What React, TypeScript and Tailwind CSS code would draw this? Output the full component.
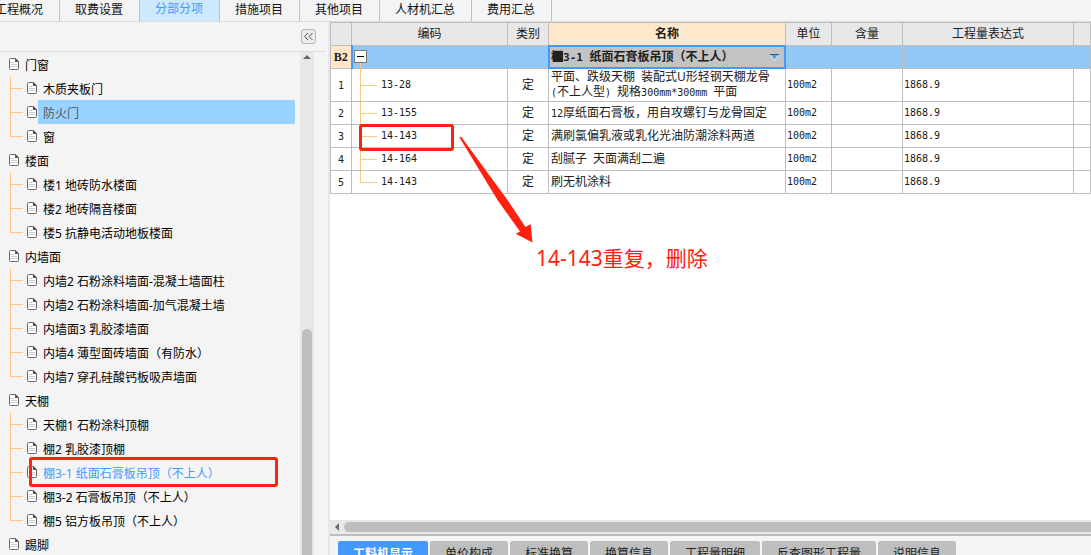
import React from "react";

type Group = { name: string; items: string[] };

const topTabs = ["工程概况", "取费设置", "分部分项", "措施项目", "其他项目", "人材机汇总", "费用汇总"];
const bottomTabs = ["工料机显示", "单价构成", "标准换算", "换算信息", "工程量明细", "反查图形工程量", "说明信息"];

const groups: Group[] = [
  { name: "门窗", items: ["木质夹板门", "防火门", "窗"] },
  { name: "楼面", items: ["楼1 地砖防水楼面", "楼2 地砖隔音楼面", "楼5 抗静电活动地板楼面"] },
  {
    name: "内墙面",
    items: [
      "内墙2 石粉涂料墙面-混凝土墙面柱",
      "内墙2 石粉涂料墙面-加气混凝土墙",
      "内墙面3 乳胶漆墙面",
      "内墙4 薄型面砖墙面（有防水）",
      "内墙7 穿孔硅酸钙板吸声墙面",
    ],
  },
  {
    name: "天棚",
    items: [
      "天棚1 石粉涂料顶棚",
      "棚2 乳胶漆顶棚",
      "棚3-1 纸面石膏板吊顶（不上人）",
      "棚3-2 石膏板吊顶（不上人）",
      "棚5 铝方板吊顶（不上人）",
    ],
  },
  { name: "踢脚", items: [] },
];

const highlighted = "防火门";
const current = "棚3-1 纸面石膏板吊顶（不上人）";

function Mono({ children }: { children: React.ReactNode }) {
  return <span className="font-['DejaVu_Sans_Mono',monospace] text-[10px]">{children}</span>;
}

const rows: { code: string; name: React.ReactNode }[] = [
  {
    code: "13-28",
    name: (
      <>
        平面、跌级天棚<Mono> </Mono>装配式U形轻钢天棚龙骨
        <br />
        <Mono>(</Mono>不上人型<Mono>) </Mono>规格<Mono>300mm*300mm </Mono>平面
      </>
    ),
  },
  { code: "13-155", name: <><Mono>12</Mono>厚纸面石膏板，用自攻螺钉与龙骨固定</> },
  { code: "14-143", name: "满刷氯偏乳液或乳化光油防潮涂料两道" },
  { code: "14-164", name: <>刮腻子<Mono> </Mono>天面满刮二遍</> },
  { code: "14-143", name: "刷无机涂料" },
];

function DocIcon() {
  return (
    <svg className="h-3 w-[10px] shrink-0" viewBox="0 0 10 12" aria-hidden="true">
      <path d="M.5 1.5a1 1 0 0 1 1-1H6.500L9.500 3.500V10.500a1 1 0 0 1-1 1h-7a1 1 0 0 1-1-1z" fill="#fff" stroke="#666" />
      <path d="M6 0v4h4z" fill="#555" />
      <path d="M2 4.500H5M2 6.500h6M2 8.500h6" stroke="#ccc" />
    </svg>
  );
}

function Tree() {
  return (
    <ul className="min-w-0 flex-1 text-black">
      {groups.map((group) => (
        <li key={group.name}>
          <div className="flex h-6 items-center gap-[6px] pl-[9px]">
            <DocIcon />
            <span className="pt-[3px] whitespace-nowrap">{group.name}</span>
          </div>
          <ul className="pl-[10px]">
            {group.items.map((item, i) => (
              <li key={item} className="flex h-6">
                <span className="flex w-[13px] shrink-0 flex-col">
                  <span className="h-[13px] border-b border-l border-[#fdc982]" />
                  <span className={i < group.items.length - 1 ? "h-[11px] border-l border-[#fdc982]" : "h-[11px]"} />
                </span>
                <span className="flex items-center pl-1">
                  <DocIcon />
                </span>
                <a
                  href="#"
                  className={
                    "mr-[5px] ml-px flex flex-1 items-center pt-[3px] pl-[5px] whitespace-nowrap " +
                    (item === highlighted ? "bg-[#99d1ff] text-[#555]" : item === current ? "text-[#4499ff]" : "")
                  }
                >
                  {item}
                </a>
              </li>
            ))}
          </ul>
        </li>
      ))}
    </ul>
  );
}

function Sidebar() {
  return (
    <aside className="flex w-[330px] shrink-0 flex-col overflow-hidden border-r-2 border-[#e8e8e8]">
      <div className="mr-[2px] flex h-[30px] shrink-0 items-center justify-end border-b border-[#dcdcdc] pr-[10px]">
        <button
          type="button"
          aria-label="收起"
          className="flex h-[15px] w-[15px] items-center justify-center rounded-[3px] border border-[#b4b4b4] bg-[#ebebeb]"
        >
          <svg className="h-[9px] w-[11px]" viewBox="0 0 11 9" fill="none" stroke="#555" aria-hidden="true">
            <path d="M5 1L1.500 4.500 5 8M9.500 1L6 4.500 9.500 8" />
          </svg>
        </button>
      </div>
      <div className="flex min-h-0 flex-1">
        <Tree />
        <div className="mr-[14px] flex w-[14px] shrink-0 flex-col items-center bg-[#e8e8e8] pt-[3px]">
          <svg className="h-1 w-2 shrink-0" viewBox="0 0 8 4" aria-hidden="true">
            <path d="M0 4L4 0l4 4z" fill="#666873" />
          </svg>
          <div className="mt-[270px] w-[10px] flex-1 rounded-t-full bg-[#bebebe]" />
        </div>
      </div>
    </aside>
  );
}

const cell = "border border-[#bebebe] p-0";

function Grid() {
  return (
    <table className="w-full table-fixed border-collapse text-[#202020]">
      <colgroup>
        <col className="w-[21px]" />
        <col className="w-[156px]" />
        <col className="w-[41px]" />
        <col className="w-[237px]" />
        <col className="w-[46px]" />
        <col className="w-[71px]" />
        <col className="w-[171px]" />
        <col />
      </colgroup>
      <thead>
        <tr className="h-[23px] bg-[#e8e8e8]">
          <th className={cell} />
          <th className={cell + " font-normal"}>编码</th>
          <th className={cell + " font-normal"}>类别</th>
          <th className={cell + " bg-[#ffe7cb] font-bold"}>名称</th>
          <th className={cell + " font-normal"}>单位</th>
          <th className={cell + " font-normal"}>含量</th>
          <th className={cell + " font-normal"}>工程量表达式</th>
          <th className={cell} />
        </tr>
      </thead>
      <tbody>
        <tr className="h-[23px] bg-[#91c8f6]">
          <th className={cell + " border-r-2 border-r-[#4499ff] bg-[#ffe7cb] font-['Liberation_Serif',serif] font-bold"}>B2</th>
          <td className={cell}>
            <div className="flex h-[22px] flex-col pl-px">
              <button
                type="button"
                aria-label="折叠"
                className="mt-1 flex h-[13px] w-[13px] shrink-0 items-center justify-center border border-[#7a7a7a] bg-white"
              >
                <span className="h-px w-[7px] bg-black" />
              </button>
              <span className="ml-[6px] flex-1 border-l border-[#fdc982]" />
            </div>
          </td>
          <td className={cell} />
          <td className={cell}>
            <div className="relative flex h-[22px] items-center justify-between bg-[#c3c3c3] pr-[6px] pl-[2px] font-bold outline-2 -outline-offset-1 outline-[#4499ff]">
              <span className="whitespace-nowrap">
                棚<span className="font-['DejaVu_Sans_Mono',monospace] text-[11px]">3-1 </span>纸面石膏板吊顶（不上人）
              </span>
              <span className="absolute top-[5px] left-1 h-[11px] w-[10px] bg-[#202020]" />
              <svg className="h-[7px] w-[9px]" viewBox="0 0 9 7" aria-hidden="true">
                <path d="M0 .5h9L4.500 6.500z" fill="#5aa5df" stroke="#eef7ff" />
                <path d="M0 .5h9" stroke="#315f83" />
              </svg>
            </div>
          </td>
          <td className={cell} />
          <td className={cell} />
          <td className={cell} />
          <td className={cell} />
        </tr>
        {rows.map((row, i) => (
          <tr key={i} className={i === 0 ? "h-[33px]" : "h-[23px]"}>
            <td className={cell + " text-center"}>
              <Mono>{i + 1}</Mono>
            </td>
            <td className={cell}>
              <div className={i === 0 ? "flex h-8 pl-2" : "flex h-[22px] pl-2"}>
                <span className="flex w-[17px] flex-col">
                  <span className="flex-1 border-b border-l border-[#fdc982]" />
                  <span className={i < rows.length - 1 ? "flex-1 border-l border-[#fdc982]" : "flex-1"} />
                </span>
                <span className="flex items-center pl-1">
                  <Mono>{row.code}</Mono>
                </span>
              </div>
            </td>
            <td className={cell + " text-center"}>定</td>
            <td className={cell + " pl-[2px] leading-[14px] whitespace-nowrap"}>{row.name}</td>
            <td className={cell + " pb-[2px] pl-px"}>
              <Mono>100m2</Mono>
            </td>
            <td className={cell} />
            <td className={cell + " pb-[2px] pl-px"}>
              <Mono>1868.9</Mono>
            </td>
            <td className={cell} />
          </tr>
        ))}
      </tbody>
    </table>
  );
}

function Annotations() {
  return (
    <div className="pointer-events-none absolute inset-0 text-[#ff2010]">
      <div className="absolute top-[457px] left-[29px] h-[30px] w-[249px] rounded-[3px] border-3 border-current" />
      <div className="absolute top-[124px] left-[359px] h-[27px] w-[95px] rounded-[3px] border-3 border-current" />
      <svg className="absolute top-[136px] left-[459px] h-[108px] w-[76px]" viewBox="459 136 76 108" aria-hidden="true">
        <path d="M459.500 137.500L461 136.500 507.500 200 525.500 227 530.700 224.300 532.500 242.400 515.700 233.700 520 231.500 497.500 200z" fill="currentColor" />
      </svg>
      <p className="absolute top-[242px] left-[536px] text-[21px] leading-8 whitespace-nowrap">14-143重复，删除</p>
    </div>
  );
}

export default function App() {
  return (
    <div className="relative flex h-screen flex-col overflow-hidden bg-[#f4f4f4] font-['Noto_Sans','Noto_Sans_CJK_SC',sans-serif] text-xs leading-4">
      <nav className="-ml-5 flex h-[22px] shrink-0 border-b border-[#dcdcdc] text-[#111]">
        {topTabs.map((tab) => (
          <button
            key={tab}
            type="button"
            className={
              "border-r border-[#bebebe] pr-4 pl-[15px] whitespace-nowrap " +
              (tab === "分部分项" ? "bg-[#cde8ff] pb-[3px] text-[#4499ff]" : "pb-px")
            }
          >
            {tab}
          </button>
        ))}
      </nav>
      <div className="flex min-h-0 flex-1">
        <Sidebar />
        <main className="flex min-w-0 flex-1 flex-col">
          <div className="min-h-0 flex-1 overflow-hidden bg-white">
            <Grid />
          </div>
          <div className="flex h-4 shrink-0 items-center border-b-2 border-[#bebebe] bg-[#e8e8e8] pl-[5px]">
            <svg className="h-2 w-1 shrink-0" viewBox="0 0 4 8" aria-hidden="true">
              <path d="M4 0L0 4l4 4z" fill="#666873" />
            </svg>
            <div className="ml-[5px] h-[10px] flex-1 rounded-l-full bg-[#bebebe]" />
          </div>
          <div className="flex h-[19px] shrink-0 items-start gap-[2px] overflow-hidden pt-[5px] pl-2">
            {bottomTabs.map((tab, i) => (
              <button
                key={tab}
                type="button"
                className={
                  "h-6 shrink-0 rounded-t-[2px] px-[15px] pt-px whitespace-nowrap " +
                  (i === 0 ? "bg-[#4499ff] font-bold text-white" : "bg-[#bebebe] text-[#222]")
                }
              >
                {tab}
              </button>
            ))}
          </div>
        </main>
      </div>
      <Annotations />
    </div>
  );
}
